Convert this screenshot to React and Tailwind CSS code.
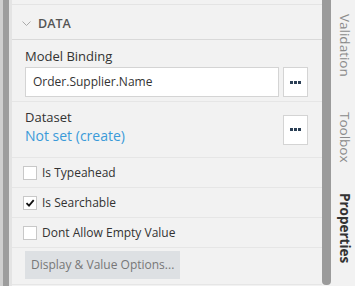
import React from "react";

const Dots = () => (
  <div className="flex gap-[1px]">
    <span className="w-[3px] h-[3px] bg-[#2b3f55]" />
    <span className="w-[3px] h-[3px] bg-[#2b3f55]" />
    <span className="w-[3px] h-[3px] bg-[#2b3f55]" />
  </div>
);

const DotButton = () => (
  <button className="w-[25px] h-[30px] bg-white border border-[#d4d4d4] flex items-center justify-center">
    <Dots />
  </button>
);

const CheckRow = ({ label, checked }) => (
  <div className="h-[30px] border-b border-[#e6e6e6] flex items-center pl-[11px] gap-[5px]">
    <span className="w-[14px] h-[14px] bg-white border border-[#c8c8c8] flex items-center justify-center">
      {checked && (
        <svg width="10" height="10" viewBox="0 0 10 10">
          <path d="M1.5 5.2 L4 7.6 L8.7 2.2" stroke="#111" strokeWidth="1.8" fill="none" />
        </svg>
      )}
    </span>
    <span className="text-[12px] text-[#333]">{label}</span>
  </div>
);

const SideTab = ({ label, active }) => (
  <div
    className={
      "[writing-mode:vertical-rl] text-[13.5px] leading-[18px] " +
      (active ? "font-bold text-[#333]" : "text-[#8a8a8a]")
    }
  >
    {label}
  </div>
);

export default function App() {
  return (
    <div
      className="w-[355px] h-[286px] flex bg-[#f2f2f2] overflow-hidden"
      style={{ fontFamily: "'Open Sans', sans-serif" }}
    >
      {/* left splitter */}
      <div className="w-[12px] flex">
        <div className="w-[3px] bg-[#cfcfcf]" />
        <div className="w-[6px] bg-[#9d9d9d]" />
        <div className="w-[3px] bg-[#e4e4e4]" />
      </div>

      {/* main panel */}
      <div className="w-[310px] flex flex-col">
        <div className="h-[5px] border-b border-[#e4e4e4]" />
        <div className="h-[35px] border-b border-[#d9d9d9] flex items-center pl-[10px] pt-[4px] gap-[7px]">
          <svg width="9" height="6" viewBox="0 0 9 6">
            <path d="M0.5 0.5 L4.5 4.5 L8.5 0.5" stroke="#aaa" strokeWidth="1" fill="none" />
          </svg>
          <span className="text-[12.5px] font-semibold text-[#555]">DATA</span>
        </div>

        <div className="h-[62px] border-b border-[#e6e6e6] pl-[13px] pr-[14px] pt-[6px]">
          <div className="text-[13px] text-[#333] leading-[20px]">Model Binding</div>
          <div className="flex gap-[4px] mt-[1px]">
            <div className="flex-1 h-[30px] bg-white border border-[#d4d4d4] flex items-center px-[7px] text-[12px] text-[#333]">
              Order.Supplier.Name
            </div>
            <DotButton />
          </div>
        </div>

        <div className="h-[56px] border-b border-[#e6e6e6] pl-[13px] pr-[14px] flex items-center">
          <div className="flex-1 -mt-[6px]">
            <div className="text-[13px] text-[#333] leading-[18px]">Dataset</div>
            <div className="text-[14px] text-[#3a9ad9] leading-[20px]">Not set (create)</div>
          </div>
          <DotButton />
        </div>

        <CheckRow label="Is Typeahead" />
        <CheckRow label="Is Searchable" checked />
        <CheckRow label="Dont Allow Empty Value" />

        <div className="h-[37px] border-b border-[#e6e6e6] pl-[13px] pt-[3px]">
          <button className="h-[28px] px-[6px] bg-[#dde0e3] text-[12px] text-[#777]">
            Display &amp; Value Options...
          </button>
        </div>
      </div>

      {/* scrollbar */}
      <div className="w-[9px] bg-[#9b9b9b] h-[285px] rounded-b-[4px]" />

      {/* right tabs */}
      <div className="flex-1 flex flex-col items-center pl-[3px] bg-[#f2f2f2] pt-[14px]">
        <SideTab label="Validation" />
        <div className="h-[35px]" />
        <SideTab label="Toolbox" />
        <div className="h-[31px]" />
        <SideTab label="Properties" active />
      </div>
    </div>
  );
}
